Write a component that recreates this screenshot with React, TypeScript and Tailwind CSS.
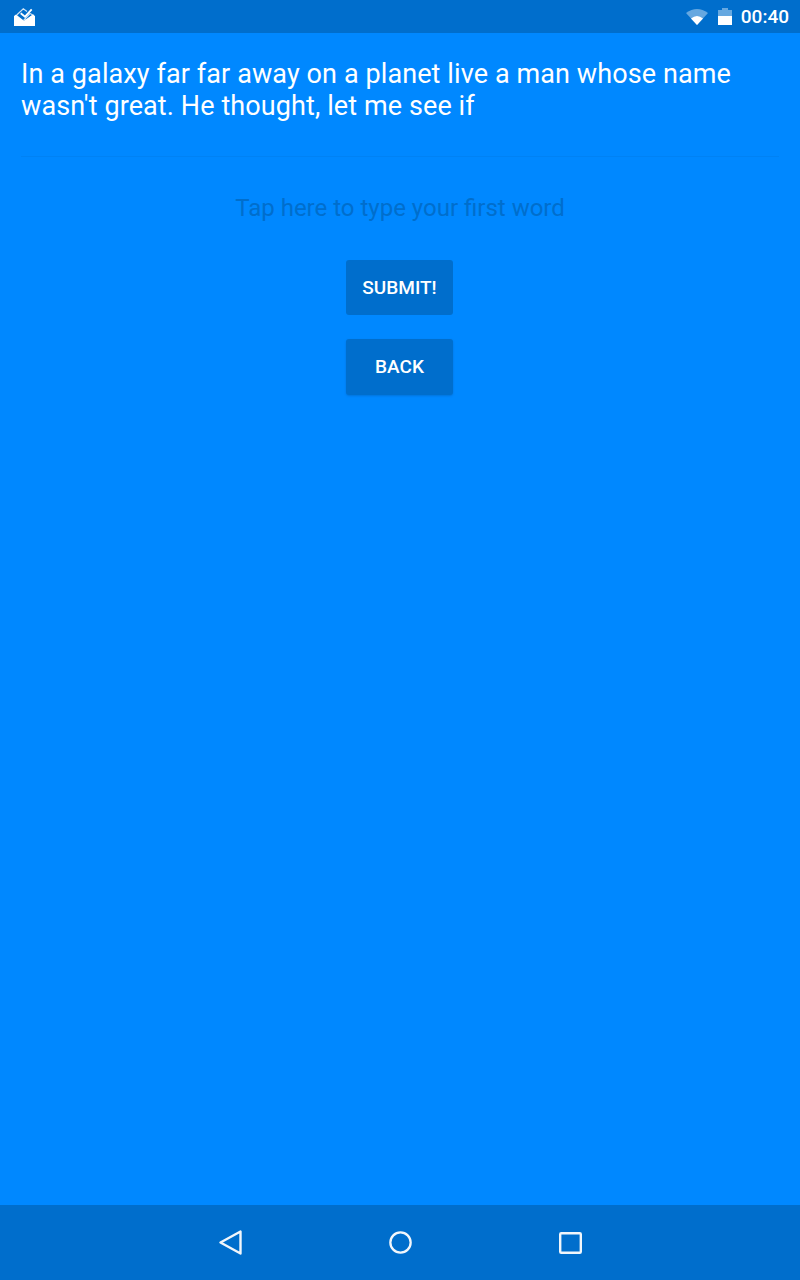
const roboto = "font-['Roboto',sans-serif]";

const StatusBar = () => (
  <div className="h-[33px] bg-[#006ecc] flex items-center justify-between pl-[14px] pr-[11px] shrink-0">
    <svg width="21" height="18" viewBox="0 0 21 18">
      <path d="M0 8 L2 6.5 L10 12.7 L19 6.5 L21 8 V18 H0 Z" fill="#fff" />
      <path d="M2.7 7 L9.3 0.8 L13 3.5 M16 5.5 L19 7 L12.7 12 L10 12 Z" fill="none" stroke="#fff" strokeWidth="1.2" opacity="0.8" />
      <path d="M6.7 5.3 L11 8.7 L17.7 1.3" fill="none" stroke="#fff" strokeWidth="1.8" />
    </svg>
    <div className="flex items-center">
      <svg width="22" height="16" viewBox="0 0 22 16" className="mr-[10px]">
        <path d="M0 4 Q11 -4 22 4 L11 16 Z" fill="#fff" opacity="0.4" />
        <path d="M5 9.5 Q11 4.5 17 9.5 L11 16 Z" fill="#fff" />
      </svg>
      <svg width="14" height="17" viewBox="0 0 14 17" className="mr-[9px]">
        <path d="M4 0 H10 V2 H14 V8 H0 V2 H4 Z" fill="#fff" opacity="0.4" />
        <rect x="0" y="8" width="14" height="9" fill="#fff" />
      </svg>
      <span className={`${roboto} text-white text-[19px] font-medium leading-none`}>00:40</span>
    </div>
  </div>
);

const NavBar = () => (
  <div className="h-[75px] bg-[#006ecc] flex items-center justify-center gap-[147px] shrink-0">
    <svg width="23" height="25" viewBox="0 0 23 25" fill="none" stroke="#f1f6fb" strokeWidth="2.4" strokeLinejoin="round">
      <path d="M1.5 12.5 L21.5 1.5 V23.5 Z" />
    </svg>
    <svg width="23" height="23" viewBox="0 0 24 24" fill="none" stroke="#f1f6fb" strokeWidth="2.4">
      <circle cx="12" cy="12" r="10.6" />
    </svg>
    <svg width="23" height="22" viewBox="0 0 23 22" fill="none" stroke="#f1f6fb" strokeWidth="2.4" strokeLinejoin="round">
      <rect x="1.2" y="1.2" width="20.6" height="19.6" rx="1" />
    </svg>
  </div>
);

const ActionButton = ({ children, className }: { children: string; className: string }) => (
  <button className={`${roboto} w-[107px] mr-px pt-px rounded-[3px] bg-[#006ecc] text-white text-[19px] font-medium ${className}`}>
    {children}
  </button>
);

export default function App() {
  return (
    <div className="w-[800px] h-[1280px] bg-[#0088ff] flex flex-col overflow-hidden">
      <StatusBar />
      <div className={`${roboto} flex-1 px-[21px] pt-[25px] flex flex-col`}>
        <p className="text-white text-[27px] leading-[32px] tracking-[0.1px]">
          In a galaxy far far away on a planet live a man whose name wasn't great. He thought, let me see if
        </p>
        <div className="h-px bg-[#0082f4] mt-[34px]" />
        <div className="flex flex-col items-center">
          <div className="text-[#006ecc] text-[24px] leading-[28px] mt-[37px]">Tap here to type your first word</div>
          <ActionButton className="h-[55px] mt-[38px]">SUBMIT!</ActionButton>
          <ActionButton className="h-[56px] mt-[24px] shadow-[0_1px_2px_rgba(0,60,120,0.25)]">BACK</ActionButton>
        </div>
      </div>
      <NavBar />
    </div>
  );
}
